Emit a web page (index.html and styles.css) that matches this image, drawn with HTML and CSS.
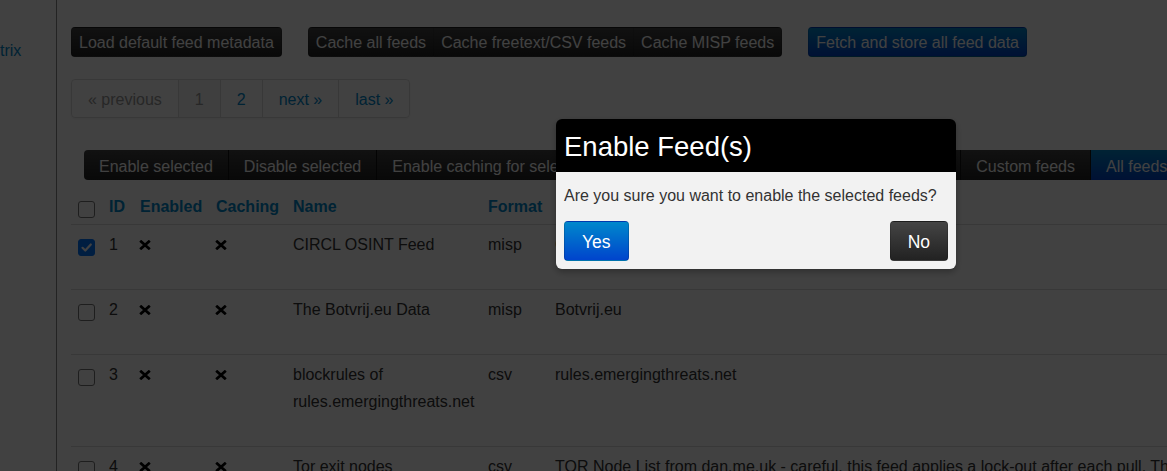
FILE: index.html
```html
<!DOCTYPE html>
<html lang="en">
<head>
<meta charset="utf-8">
<title>Feeds</title>
<link rel="stylesheet" href="styles.css">
</head>
<body>
<div class="page">
  <aside class="sidebar">
    <a class="side-link" href="#">trix</a>
  </aside>
  <main class="main">
    <div class="actions">
      <a class="btn btn-inverse" href="#">Load default feed metadata</a>
      <div class="btn-group">
        <a class="btn btn-inverse" href="#">Cache all feeds</a>
        <a class="btn btn-inverse" href="#">Cache freetext/CSV feeds</a>
        <a class="btn btn-inverse" href="#">Cache MISP feeds</a>
      </div>
      <a class="btn btn-primary" href="#">Fetch and store all feed data</a>
    </div>

    <ul class="pagination">
      <li class="disabled">« previous</li>
      <li class="active">1</li>
      <li><a href="#">2</a></li>
      <li><a href="#">next »</a></li>
      <li><a href="#">last »</a></li>
    </ul>

    <div class="tabbar">
      <span class="tab">Enable selected</span>
      <span class="tab">Disable selected</span>
      <span class="tab">Enable caching for selected</span>
      <span class="tab">Disable caching for selected</span>
      <span class="tab">Default feeds</span>
      <span class="tab">Custom feeds</span>
      <span class="tab active">All feeds</span>
    </div>

    <table class="feeds">
      <colgroup>
        <col class="c-cb"><col class="c-id"><col class="c-en"><col class="c-ca"><col class="c-name"><col class="c-fmt"><col class="c-prov">
      </colgroup>
      <thead>
        <tr>
          <th><span class="cb"></span></th>
          <th>ID</th>
          <th>Enabled</th>
          <th>Caching</th>
          <th>Name</th>
          <th>Format</th>
          <th>Provider</th>
        </tr>
      </thead>
      <tbody>
        <tr>
          <td><span class="cb checked"><svg width="15" height="15" viewBox="0 0 15 15"><path d="M3.5 7.8 L6.3 10.5 L11.8 4.5" fill="none" stroke="#fff" stroke-width="2.2" stroke-linecap="round" stroke-linejoin="round"/></svg></span></td>
          <td>1</td>
          <td><svg class="x" width="12" height="10" viewBox="0 0 12 10"><path d="M1.2 0.8 L10.8 9.2 M10.8 0.8 L1.2 9.2" stroke="#000" stroke-width="2.8"/></svg></td>
          <td><svg class="x" width="12" height="10" viewBox="0 0 12 10"><path d="M1.2 0.8 L10.8 9.2 M10.8 0.8 L1.2 9.2" stroke="#000" stroke-width="2.8"/></svg></td>
          <td>CIRCL OSINT Feed</td>
          <td>misp</td>
          <td>CIRCL</td>
        </tr>
        <tr>
          <td><span class="cb"></span></td>
          <td>2</td>
          <td><svg class="x" width="12" height="10" viewBox="0 0 12 10"><path d="M1.2 0.8 L10.8 9.2 M10.8 0.8 L1.2 9.2" stroke="#000" stroke-width="2.8"/></svg></td>
          <td><svg class="x" width="12" height="10" viewBox="0 0 12 10"><path d="M1.2 0.8 L10.8 9.2 M10.8 0.8 L1.2 9.2" stroke="#000" stroke-width="2.8"/></svg></td>
          <td>The Botvrij.eu Data</td>
          <td>misp</td>
          <td>Botvrij.eu</td>
        </tr>
        <tr>
          <td><span class="cb"></span></td>
          <td>3</td>
          <td><svg class="x" width="12" height="10" viewBox="0 0 12 10"><path d="M1.2 0.8 L10.8 9.2 M10.8 0.8 L1.2 9.2" stroke="#000" stroke-width="2.8"/></svg></td>
          <td><svg class="x" width="12" height="10" viewBox="0 0 12 10"><path d="M1.2 0.8 L10.8 9.2 M10.8 0.8 L1.2 9.2" stroke="#000" stroke-width="2.8"/></svg></td>
          <td>blockrules of rules.emergingthreats.net</td>
          <td>csv</td>
          <td>rules.emergingthreats.net</td>
        </tr>
        <tr>
          <td><span class="cb"></span></td>
          <td>4</td>
          <td><svg class="x" width="12" height="10" viewBox="0 0 12 10"><path d="M1.2 0.8 L10.8 9.2 M10.8 0.8 L1.2 9.2" stroke="#000" stroke-width="2.8"/></svg></td>
          <td><svg class="x" width="12" height="10" viewBox="0 0 12 10"><path d="M1.2 0.8 L10.8 9.2 M10.8 0.8 L1.2 9.2" stroke="#000" stroke-width="2.8"/></svg></td>
          <td>Tor exit nodes</td>
          <td>csv</td>
          <td class="nowrap">TOR Node List from dan.me.uk - careful, this feed applies a lock-out after each pull. This is shared with the "Tor ALL nodes" feed.</td>
        </tr>
      </tbody>
    </table>
  </main>
</div>

<div class="backdrop"></div>

<div class="modal">
  <div class="modal-header">Enable Feed(s)</div>
  <div class="modal-body">
    <p class="modal-text">Are you sure you want to enable the selected feeds?</p>
    <div class="modal-actions">
      <a class="mbtn mbtn-yes" href="#">Yes</a>
      <a class="mbtn mbtn-no" href="#">No</a>
    </div>
  </div>
</div>
</body>
</html>
```
FILE: styles.css
```css
* { box-sizing: border-box; }

html, body {
  margin: 0;
  padding: 0;
}

body {
  width: 1167px;
  height: 471px;
  overflow: hidden;
  background: #fff;
  color: #333;
  font-family: "Liberation Sans", Arial, Helvetica, sans-serif;
  font-size: 16px;
  line-height: 20px;
}

a {
  color: #0088cc;
  text-decoration: none;
}

.page {
  display: flex;
  align-items: stretch;
  min-height: 471px;
}

/* sidebar */
.sidebar {
  flex: none;
  width: 57px;
  border-right: 1px solid #8a8a8a;
  padding-top: 41px;
  overflow: hidden;
}

.side-link {
  display: block;
  white-space: nowrap;
}

/* main */
.main {
  flex: none;
  width: 1400px;
  padding: 27px 0 0 14px;
}

.actions {
  display: flex;
  align-items: flex-start;
  gap: 26px;
}

.btn {
  display: inline-block;
  padding: 5px 7px 3px;
  font-size: 16px;
  line-height: 20px;
  color: #fff;
  white-space: nowrap;
  border: 1px solid;
  border-radius: 4px;
}

.btn-inverse {
  background: linear-gradient(#444, #222);
  border-color: rgba(0,0,0,.1) rgba(0,0,0,.1) rgba(0,0,0,.25);
}

.btn-primary {
  background: linear-gradient(#0088cc, #0044cc);
  border-color: rgba(0,0,0,.1) rgba(0,0,0,.1) rgba(0,0,0,.25);
}

.btn-group {
  display: flex;
}

.btn-group .btn {
  border-radius: 0;
}

.btn-group .btn + .btn {
  margin-left: -1px;
}

.btn-group .btn:first-child {
  border-radius: 4px 0 0 4px;
}

.btn-group .btn:last-child {
  border-radius: 0 4px 4px 0;
}

/* pagination */
.pagination {
  display: flex;
  width: max-content;
  margin: 22px 0 0;
  padding: 0;
  list-style: none;
  border: 1px solid #ddd;
  border-radius: 4px;
  box-shadow: 0 1px 2px rgba(0,0,0,.05);
  overflow: hidden;
}

.pagination li {
  padding: 2px 16px 0;
  line-height: 35px;
  border-left: 1px solid #ddd;
}

.pagination li:first-child {
  border-left: 0;
}

.pagination .disabled {
  color: #999;
}

.pagination .active {
  color: #999;
  background: #f5f5f5;
}

/* tab bar */
.tabbar {
  display: flex;
  width: max-content;
  margin: 32px 0 0 13px;
  border-radius: 4px;
  overflow: hidden;
}

.tab {
  padding: 3px 15px 0;
  line-height: 27px;
  color: #fff;
  white-space: nowrap;
  background: linear-gradient(#444, #222);
  border-left: 1px solid #111;
}

.tab:first-child {
  border-left: 0;
}

.tab.active {
  background: linear-gradient(#0088cc, #0044cc);
}

/* table */
.feeds {
  margin-top: 7px;
  width: 1300px;
  table-layout: fixed;
  border-collapse: separate;
  border-spacing: 0;
}

.c-cb { width: 31px; }
.c-id { width: 31px; }
.c-en { width: 76px; }
.c-ca { width: 77px; }
.c-name { width: 195px; }
.c-fmt { width: 67px; }
.c-prov { width: 823px; }

.feeds th,
.feeds td {
  padding: 6px 7px 31px;
  line-height: 27px;
  text-align: left;
  vertical-align: top;
}

.feeds th {
  padding-bottom: 4px;
  color: #0088cc;
  font-weight: bold;
}

.feeds td {
  border-top: 1px solid #ddd;
}

.feeds .nowrap {
  white-space: nowrap;
}

.cb {
  display: block;
  width: 17px;
  height: 17px;
  margin-top: 8px;
  border: 1px solid #767676;
  border-radius: 3px;
  background: #fff;
}

.cb.checked {
  background: #0075ff;
  border-color: #0075ff;
}

.cb svg {
  display: block;
  margin: 0;
}

.x {
  display: block;
  margin: 9px 0 0 -1px;
}

/* backdrop + modal */
.backdrop {
  position: fixed;
  inset: 0;
  background: rgba(0,0,0,.745);
  z-index: 10;
}

.modal {
  position: fixed;
  left: 556px;
  top: 119px;
  width: 400px;
  z-index: 11;
  border-radius: 6px;
  box-shadow: 0 3px 7px rgba(0,0,0,.3);
  overflow: hidden;
}

.modal-header {
  display: flex;
  align-items: center;
  height: 53px;
  padding: 2px 8px 0;
  background: #000;
  color: #fff;
  font-size: 27.5px;
  line-height: 31px;
}

.modal-body {
  background: #f2f2f2;
  padding: 14px 8px 8px;
}

.modal-text {
  margin: 0;
  font-size: 16px;
  line-height: 20px;
  color: #333;
}

.modal-actions {
  display: flex;
  justify-content: space-between;
  margin-top: 15px;
}

.mbtn {
  display: flex;
  align-items: center;
  height: 40px;
  padding: 2px 17px 0;
  font-size: 17.5px;
  color: #fff;
  border: 1px solid rgba(0,0,0,.15);
  border-radius: 4px;
}

.mbtn-yes {
  background: linear-gradient(#0088cc, #0044cc);
}

.mbtn-no {
  background: linear-gradient(#444, #222);
}
```
